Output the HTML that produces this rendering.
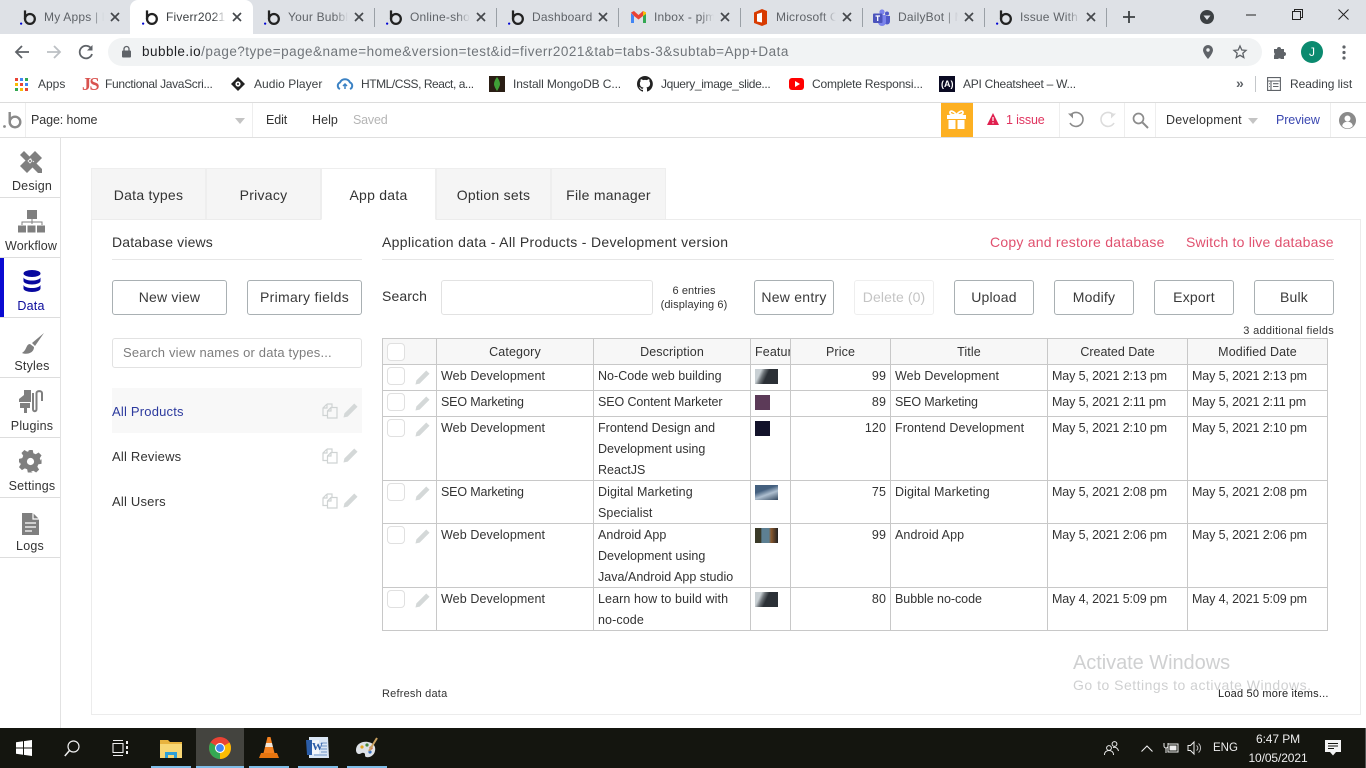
<!DOCTYPE html>
<html lang="en"><head><meta charset="utf-8"><title>Bubble editor</title>
<style>
*{box-sizing:border-box}
html,body{margin:0;padding:0;width:1366px;height:768px;overflow:hidden;background:#fff}
body{font-family:"Liberation Sans",sans-serif;color:#333;position:relative}
.t{position:absolute;white-space:nowrap;line-height:20px;font-size:12.5px;letter-spacing:.05px;color:#333}
.b{position:absolute;background:#ddd}
.tab{color:#5f6368;font-size:12px;letter-spacing:.2px;overflow:hidden;-webkit-mask-image:linear-gradient(90deg,#000 78%,transparent);mask-image:linear-gradient(90deg,#000 78%,transparent)}
.x{position:absolute;top:11px;width:12px;height:12px}
.sep{position:absolute;top:8px;width:1px;height:19px;background:#9aa0a6}
.bk{color:#3c4043;font-size:12px;letter-spacing:.1px}
svg{position:absolute;overflow:visible}
.btn{position:absolute;height:35px;border:1px solid #a9b0b3;border-radius:3px;background:#fff;text-align:center;line-height:33px;font-size:14px;letter-spacing:.2px;color:#3a3a3a;white-space:nowrap}
.ptab{position:absolute;top:168px;height:51px;width:115px;background:#f5f5f5;border:1px solid #eeeeee;border-bottom:0;text-align:center;line-height:53px;font-size:14px;letter-spacing:.25px;color:#333}
.side{position:absolute;left:0;width:60px;text-align:center;font-size:12.5px;letter-spacing:.2px;line-height:16px;color:#333}
.g{background:#c8c8c8}
.hd{position:absolute;top:339px;height:25px;line-height:26px;text-align:center;font-size:12.5px;letter-spacing:.12px;color:#333}
.cb{position:absolute;left:387px;width:18px;height:18px;border:1px solid #e0e0e0;border-radius:4px;background:#fff}
.th{position:absolute;left:755px;height:15px}
.v{font-size:12.5px;letter-spacing:.1px;color:#333}
.d{letter-spacing:-.13px}
</style></head><body>
<svg width="0" height="0" style="position:absolute"><defs>
<symbol id="bl" viewBox="0 0 18 18"><circle cx="10.500" cy="10.500" r="5.200" fill="none" stroke="#222" stroke-width="2.400"/><path d="M5.300 1.500L5.300 10.500" stroke="#222" stroke-width="2.400" fill="none"/><circle cx="1.200" cy="15.500" r="1.200" fill="#0205d3"/></symbol>
<symbol id="xx" viewBox="0 0 12 12"><path d="M2 2L10 10M10 2L2 10" stroke="#45484c" stroke-width="1.700" fill="none"/></symbol>
<symbol id="pn" viewBox="0 0 16 16"><path d="M.5 15.500l1-4.500L12 .5 15.500 4 5 14.500z" fill="#d4d8d8"/></symbol>
<symbol id="cp" viewBox="0 0 16 16"><path d="M5 1h5v3.500M5 1L1 5v7.500h4.500M5 1v4H1M9 4.500h6V15H5.500V8zM9 4.500V8H5.500" fill="none" stroke="#cfd3d3" stroke-width="1.200"/></symbol>
</defs></svg>

<!-- chrome tab strip -->
<div class="b" style="left:0;top:0;width:1366px;height:34px;background:#dee1e6"></div>
<div class="b" style="left:130px;top:0;width:123px;height:35px;background:#fff;border-radius:8px 8px 0 0"></div>
<svg style="left:20px;top:9px" width="17" height="17"><use href="#bl"/></svg><div class="t tab" style="left:44px;top:7px;width:60px">My Apps | Bubble</div><svg class="x" style="left:109px"><use href="#xx"/></svg>
<svg style="left:142px;top:9px" width="17" height="17"><use href="#bl"/></svg><div class="t tab" style="left:166px;top:7px;width:60px;color:#3c4043">Fiverr2021 | Bubble</div><svg class="x" style="left:231px"><use href="#xx"/></svg>
<svg style="left:264px;top:9px" width="17" height="17"><use href="#bl"/></svg><div class="t tab" style="left:288px;top:7px;width:60px">Your Bubble apps</div><svg class="x" style="left:353px"><use href="#xx"/></svg><div class="sep" style="left:374px"></div>
<svg style="left:386px;top:9px" width="17" height="17"><use href="#bl"/></svg><div class="t tab" style="left:410px;top:7px;width:60px">Online-shopping</div><svg class="x" style="left:475px"><use href="#xx"/></svg><div class="sep" style="left:496px"></div>
<svg style="left:508px;top:9px" width="17" height="17"><use href="#bl"/></svg><div class="t tab" style="left:532px;top:7px;width:64px;-webkit-mask-image:none;mask-image:none">Dashboard</div><svg class="x" style="left:597px"><use href="#xx"/></svg><div class="sep" style="left:618px"></div>
<svg style="left:631px;top:11px" width="15" height="12" viewBox="0 0 15 12"><path d="M0 2v10h3V5z" fill="#4285f4"/><path d="M15 2v10h-3V5z" fill="#34a853"/><path d="M0 1.500L3 0l4.500 4L12 0l3 1.500L12 5 7.500 8.500 3 5z" fill="#ea4335"/><path d="M12 0l3 1.500V3l-3 2z" fill="#fbbc04"/></svg><div class="t tab" style="left:654px;top:7px;width:60px">Inbox - pjmwangi</div><svg class="x" style="left:719px"><use href="#xx"/></svg><div class="sep" style="left:740px"></div>
<svg style="left:754px;top:9px" width="13" height="17" viewBox="0 0 13 17"><path d="M0 3.500L8 0l5 2v13l-5 2-8-3z" fill="#d83b01"/><path d="M3 5l5-1.500v10L3 12.500z" fill="#fff"/></svg><div class="t tab" style="left:776px;top:7px;width:60px">Microsoft Office</div><svg class="x" style="left:841px"><use href="#xx"/></svg><div class="sep" style="left:862px"></div>
<svg style="left:873px;top:9px" width="17" height="17" viewBox="0 0 17 17"><circle cx="9" cy="3" r="2.600" fill="#7b83eb"/><circle cx="14" cy="4.500" r="2" fill="#5059c9"/><path d="M11 7h6v5.500a3 3 0 0 1-6 0z" fill="#5059c9"/><path d="M5 6h8v7a4 4 0 0 1-8 0z" fill="#7b83eb"/><rect x="0" y="4.500" width="9.500" height="9.500" rx="1" fill="#4b53bc"/><path d="M2.500 7h4.500M4.700 7v5" stroke="#fff" stroke-width="1.300"/></svg><div class="t tab" style="left:898px;top:7px;width:60px">DailyBot | Microsoft</div><svg class="x" style="left:963px"><use href="#xx"/></svg><div class="sep" style="left:984px"></div>
<svg style="left:996px;top:9px" width="17" height="17"><use href="#bl"/></svg><div class="t tab" style="left:1020px;top:7px;width:60px">Issue With Upload</div><svg class="x" style="left:1085px"><use href="#xx"/></svg><div class="sep" style="left:1106px"></div>
<svg style="left:1122px;top:10px" width="14" height="14" viewBox="0 0 14 14"><path d="M7 1v12M1 7h12" stroke="#3c4043" stroke-width="1.800"/></svg>
<svg style="left:1200px;top:10px" width="14" height="14" viewBox="0 0 14 14"><circle cx="7" cy="7" r="7" fill="#3c4043"/><path d="M3.500 5.500h7L7 10z" fill="#dee1e6"/></svg>
<svg style="left:1246px;top:14px" width="10" height="2"><path d="M0 1h10" stroke="#222" stroke-width="1"/></svg>
<svg style="left:1292px;top:9px" width="11" height="11" viewBox="0 0 11 11"><path d="M.5 2.500h8v8h-8zM2.500 2.500v-2h8v8h-2" fill="none" stroke="#222"/></svg>
<svg style="left:1338px;top:9px" width="11" height="11" viewBox="0 0 11 11"><path d="M.5.500l10 10M10.500.500l-10 10" stroke="#222" stroke-width="1"/></svg>

<!-- toolbar -->
<svg style="left:14px;top:44px" width="16" height="16" viewBox="0 0 16 16"><path d="M15 8H2M8 2L2 8l6 6" fill="none" stroke="#5f6368" stroke-width="1.800"/></svg>
<svg style="left:46px;top:44px" width="16" height="16" viewBox="0 0 16 16"><path d="M1 8h13M8 2l6 6-6 6" fill="none" stroke="#bcc0c4" stroke-width="1.800"/></svg>
<svg style="left:78px;top:44px" width="16" height="16" viewBox="0 0 16 16"><path d="M13.500 5A6.300 6.300 0 1 0 14 10" fill="none" stroke="#5f6368" stroke-width="1.800"/><path d="M14.500 1v5.500H9z" fill="#5f6368"/></svg>
<div class="b" style="left:108px;top:38px;width:1154px;height:28px;background:#f1f3f4;border-radius:14px"></div>
<svg style="left:121px;top:46px" width="11" height="12" viewBox="0 0 11 12"><rect x="1" y="4.500" width="9" height="7" rx="1" fill="#5f6368"/><path d="M3 5V3a2.500 2.500 0 0 1 5 0v2" fill="none" stroke="#5f6368" stroke-width="1.300"/></svg>
<div class="t" style="left:142px;top:42px;font-size:13.500px;letter-spacing:.48px;color:#70757a"><span style="color:#202124">bubble.io</span>/page?type=page&amp;name=home&amp;version=test&amp;id=fiverr2021&amp;tab=tabs-3&amp;subtab=App+Data</div>
<svg style="left:1203px;top:45px" width="10" height="14" viewBox="0 0 10 14"><path d="M5 0a5 5 0 0 1 5 5c0 3.500-5 9-5 9S0 8.500 0 5a5 5 0 0 1 5-5z" fill="#5f6368"/><circle cx="5" cy="5" r="1.700" fill="#f1f3f4"/></svg>
<svg style="left:1233px;top:45px" width="14" height="14" viewBox="0 0 14 14"><path d="M7 1l1.800 4 4.200.4-3.200 2.800 1 4.300L7 10.300 3.200 12.500l1-4.300L1 5.400 5.200 5z" fill="none" stroke="#5f6368" stroke-width="1.300"/></svg>
<svg style="left:1273px;top:45px" width="14" height="14" viewBox="0 0 14 14"><path d="M1 4h3a2 2 0 0 1 4 0h3v3a2 2 0 0 1 0 4v3H8a2 2 0 0 0-3 0H1v-3.500a2 2 0 0 0 0-3z" fill="#5f6368"/></svg>
<div class="b" style="left:1301px;top:41px;width:22px;height:22px;border-radius:50%;background:#0b8a6f;color:#fff;font-size:12px;line-height:22px;text-align:center">J</div>
<svg style="left:1342px;top:45px" width="4" height="15" viewBox="0 0 4 15"><circle cx="2" cy="2" r="1.600" fill="#5f6368"/><circle cx="2" cy="7.500" r="1.600" fill="#5f6368"/><circle cx="2" cy="13" r="1.600" fill="#5f6368"/></svg>

<!-- bookmarks -->
<svg style="left:15px;top:78px" width="13" height="13" viewBox="0 0 13 13"><rect width="3" height="3" fill="#ea4335"/><rect x="5" width="3" height="3" fill="#4285f4"/><rect x="10" width="3" height="3" fill="#34a853"/><rect y="5" width="3" height="3" fill="#fbbc04"/><rect x="5" y="5" width="3" height="3" fill="#ea4335"/><rect x="10" y="5" width="3" height="3" fill="#4285f4"/><rect y="10" width="3" height="3" fill="#34a853"/><rect x="5" y="10" width="3" height="3" fill="#fbbc04"/><rect x="10" y="10" width="3" height="3" fill="#ea4335"/></svg>
<div class="t bk" style="left:38px;top:74px;letter-spacing:0">Apps</div>
<div class="t" style="left:82px;top:74px;font-family:'Liberation Serif',serif;font-weight:700;font-size:18px;letter-spacing:-1.500px;color:#d9534f">JS</div>
<div class="t bk" style="left:105px;top:74px;letter-spacing:-.33px">Functional JavaScri...</div>
<svg style="left:231px;top:77px" width="14" height="14" viewBox="0 0 14 14"><path d="M7 0l7 7-7 7-7-7z" fill="#222"/><circle cx="7" cy="7" r="2.600" fill="#fff"/><circle cx="7" cy="7" r="1" fill="#222"/></svg>
<div class="t bk" style="left:254px;top:74px;letter-spacing:.03px">Audio Player</div>
<svg style="left:337px;top:78px" width="16" height="12" viewBox="0 0 16 12"><path d="M3 11a3.500 3.500 0 0 1 0-6.500 5.500 5.500 0 0 1 10 0A3.500 3.500 0 0 1 13 11" fill="none" stroke="#3b82c4" stroke-width="2"/><path d="M8 11V6M6 8l2-2 2 2" fill="none" stroke="#3b82c4" stroke-width="1.500"/></svg>
<div class="t bk" style="left:361px;top:74px;letter-spacing:-.45px">HTML/CSS, React, a...</div>
<div class="b" style="left:489px;top:76px;width:16px;height:16px;background:#2a1e14"></div>
<svg style="left:494px;top:77px" width="6" height="14" viewBox="0 0 6 14"><path d="M3 0c2 2.500 3 5 3 7s-1.500 4.500-3 7c-1.500-2.500-3-5-3-7s1-4.500 3-7z" fill="#3fa037"/></svg>
<div class="t bk" style="left:513px;top:74px;letter-spacing:-.1px">Install MongoDB C...</div>
<svg style="left:637px;top:76px" width="16" height="16" viewBox="0 0 16 16"><path d="M8 0a8 8 0 0 0-2.500 15.600c.4 0 .5-.2.500-.4v-1.400c-2.200.5-2.700-1-2.700-1-.4-.9-.9-1.200-.9-1.200-.7-.5.100-.5.100-.5.800.1 1.200.8 1.200.8.700 1.200 1.900.9 2.300.7.100-.5.300-.9.500-1.100-1.800-.2-3.600-.9-3.600-4 0-.9.300-1.600.8-2.100-.1-.2-.4-1 .1-2.100 0 0 .7-.2 2.200.8a7.500 7.500 0 0 1 4 0c1.500-1 2.200-.8 2.200-.8.400 1.100.2 1.900.1 2.100.5.600.8 1.300.8 2.100 0 3.100-1.900 3.700-3.700 3.900.3.300.6.800.6 1.500v2.200c0 .2.100.5.600.4A8 8 0 0 0 8 0z" fill="#222"/></svg>
<div class="t bk" style="left:661px;top:74px;letter-spacing:-.35px">Jquery_image_slide...</div>
<div class="b" style="left:789px;top:78px;width:15px;height:12px;background:#f00;border-radius:3px"></div>
<svg style="left:795px;top:81px" width="5" height="6"><path d="M0 0l5 3-5 3z" fill="#fff"/></svg>
<div class="t bk" style="left:812px;top:74px;letter-spacing:-.2px">Complete Responsi...</div>
<div class="b" style="left:939px;top:76px;width:16px;height:16px;background:#0a0a23"></div>
<div class="t" style="left:941px;top:74px;font-size:9px;font-weight:700;color:#fff;letter-spacing:0">(A)</div>
<div class="t bk" style="left:963px;top:74px;letter-spacing:-.25px">API Cheatsheet – W...</div>
<div class="t" style="left:1236px;top:73px;font-size:14px;font-weight:700;color:#5f6368">»</div>
<div class="b" style="left:1255px;top:76px;width:1px;height:16px;background:#c4c7ca"></div>
<svg style="left:1267px;top:77px" width="14" height="14" viewBox="0 0 14 14"><path d="M.6.600h12.800v12.800H.6zM.6 4h12.800M4 4v9.400M6 6.700h5.500M6 9.500h5.500M2 6.700h.8M2 9.500h.8" fill="none" stroke="#5f6368" stroke-width="1.100"/></svg>
<div class="t bk" style="left:1290px;top:74px;letter-spacing:-.05px">Reading list</div>
<div class="b" style="left:0;top:102px;width:1366px;height:1px;background:#dcdcdc"></div>

<!-- bubble header -->
<div class="b" style="left:0;top:137px;width:1366px;height:1px;background:#dfdfdf"></div>
<div class="b" style="left:25px;top:103px;width:1px;height:34px;background:#eee"></div>
<svg style="left:3px;top:110px" width="18" height="19" viewBox="0 0 18 19"><circle cx="12" cy="12" r="5.300" fill="none" stroke="#8a8a8a" stroke-width="2.400"/><path d="M6.700 2v10" stroke="#8a8a8a" stroke-width="2.400"/><circle cx="1.500" cy="16.500" r="1.400" fill="#8a8a8a"/></svg>
<div class="t" style="left:31px;top:110px;letter-spacing:-.1px">Page: home</div>
<svg style="left:235px;top:118px" width="10" height="6"><path d="M0 0h10L5 6z" fill="#c4c4c4"/></svg>
<div class="b" style="left:252px;top:103px;width:1px;height:34px;background:#eee"></div>
<div class="t" style="left:266px;top:110px;letter-spacing:-.1px">Edit</div>
<div class="t" style="left:312px;top:110px;letter-spacing:.05px">Help</div>
<div class="t" style="left:353px;top:110px;color:#b5b5b5;letter-spacing:-.2px">Saved</div>
<div class="b" style="left:941px;top:103px;width:32px;height:34px;background:#fdb022"></div>
<svg style="left:946px;top:110px" width="21" height="20" viewBox="0 0 21 20"><path d="M1 5h19v4H1zM2.500 10h7v9h-7zM11.500 10h7v9h-7z" fill="#fff"/><path d="M10.500 5C8 1 4 0 4 2.500S8 5 10.500 5zM10.500 5C13 1 17 0 17 2.500S13 5 10.500 5z" fill="none" stroke="#fff" stroke-width="1.800"/></svg>
<svg style="left:987px;top:113px" width="12" height="12" viewBox="0 0 12 12"><path d="M6 0l6 12H0z" fill="#e0204f"/><path d="M6 4v4M6 9.200v1.300" stroke="#fff" stroke-width="1.200"/></svg>
<div class="t" style="left:1006px;top:110px;color:#e0345f;letter-spacing:-.15px">1 issue</div>
<div class="b" style="left:1059px;top:103px;width:1px;height:34px;background:#eee"></div>
<svg style="left:1068px;top:112px" width="16" height="16" viewBox="0 0 16 16"><path d="M3 2.500A7 7 0 1 1 2 11" fill="none" stroke="#8b8b8b" stroke-width="1.600"/><path d="M0 1.500h5v5z" fill="#8b8b8b"/></svg>
<svg style="left:1100px;top:112px" width="16" height="16" viewBox="0 0 16 16"><path d="M13 2.500A7 7 0 1 0 14 11" fill="none" stroke="#dcdcdc" stroke-width="1.600"/><path d="M16 1.500h-5v5z" fill="#dcdcdc"/></svg>
<div class="b" style="left:1124px;top:103px;width:1px;height:34px;background:#eee"></div>
<svg style="left:1132px;top:112px" width="17" height="17" viewBox="0 0 17 17"><circle cx="6.500" cy="6.500" r="5" fill="none" stroke="#8b8b8b" stroke-width="1.700"/><path d="M10.500 10.500L16 16" stroke="#8b8b8b" stroke-width="2"/></svg>
<div class="b" style="left:1155px;top:103px;width:1px;height:34px;background:#eee"></div>
<div class="t" style="left:1166px;top:110px;letter-spacing:.2px">Development</div>
<svg style="left:1248px;top:118px" width="10" height="6"><path d="M0 0h10L5 6z" fill="#c4c4c4"/></svg>
<div class="t" style="left:1276px;top:110px;color:#3a47b0;letter-spacing:-.1px">Preview</div>
<div class="b" style="left:1330px;top:103px;width:1px;height:34px;background:#eee"></div>
<svg style="left:1339px;top:112px" width="17" height="17" viewBox="0 0 17 17"><circle cx="8.500" cy="8.500" r="8.500" fill="#8b8b8b"/><circle cx="8.500" cy="6.500" r="3" fill="#fff"/><path d="M3.200 14c.5-3 2.700-4.200 5.300-4.200s4.800 1.200 5.300 4.200a7 7 0 0 1-10.600 0z" fill="#fff"/></svg>

<!-- sidebar -->
<div class="b" style="left:60px;top:138px;width:1px;height:590px;background:#e2e2e2"></div>
<div class="b" style="left:0;top:197px;width:60px;height:1px"></div>
<div class="b" style="left:0;top:257px;width:60px;height:1px"></div>
<div class="b" style="left:0;top:317px;width:60px;height:1px"></div>
<div class="b" style="left:0;top:377px;width:60px;height:1px"></div>
<div class="b" style="left:0;top:437px;width:60px;height:1px"></div>
<div class="b" style="left:0;top:497px;width:60px;height:1px"></div>
<div class="b" style="left:0;top:557px;width:60px;height:1px"></div>
<div class="b" style="left:0;top:258px;width:4px;height:59px;background:#0a0ad2"></div>
<svg style="left:19px;top:150px" width="24" height="24" viewBox="0 0 24 24"><path d="M1 5l4-4 18 18v4h-4z" fill="#7f7f7f"/><path d="M16 1l7 7-15 15-7-7z" fill="#7f7f7f"/><path d="M9 11l2 2 2-2-2-2zM11.500 8.500l1 1M14 11l1 1" stroke="#fff" stroke-width=".8" fill="none"/></svg>
<div class="side" style="top:178px;left:2px">Design</div>
<svg style="left:18px;top:210px" width="27" height="23" viewBox="0 0 27 23"><rect x="9" y="0" width="10" height="9" fill="#7f7f7f"/><path d="M14 9v5M4 15v-3h20v3" stroke="#7f7f7f" fill="none"/><rect x="0" y="15.500" width="8" height="7" fill="#7f7f7f"/><rect x="9.500" y="15.500" width="8" height="7" fill="#7f7f7f"/><rect x="19" y="15.500" width="8" height="7" fill="#7f7f7f"/></svg>
<div class="side" style="top:238px;left:1px;letter-spacing:.1px">Workflow</div>
<svg style="left:23px;top:270px" width="18" height="22" viewBox="0 0 18 22"><ellipse cx="9" cy="3.500" rx="8.500" ry="3.500" fill="#08089f"/><path d="M.5 7.500c1 2 4.500 3 8.500 3s7.500-1 8.500-3V11c0 2-4 3.500-8.500 3.500S.5 13 .5 11z" fill="#08089f"/><path d="M.5 15c1 2 4.500 3 8.500 3s7.500-1 8.500-3v3.500c0 2-4 3.500-8.500 3.500S.5 20.500.5 18.500z" fill="#08089f"/></svg>
<div class="side" style="top:298px;left:1px;color:#0b0b9c">Data</div>
<svg style="left:21px;top:333px" width="24" height="22" viewBox="0 0 24 22"><path d="M23 0L11 10l3 3zM9 11c-4 0-3 6-8 9 5 2 12 0 12-6z" fill="#7f7f7f"/></svg>
<div class="side" style="top:358px;left:2px">Styles</div>
<svg style="left:19px;top:390px" width="25" height="24" viewBox="0 0 25 24"><path d="M0 9l5-4v-5h7v12H0zM1 13h10v5H8v5H5v-5H1z" fill="#7f7f7f" fill-rule="evenodd"/><path d="M14 3v16c0 3 3.500 3 3.500 0V3c0-2.500 5.500-2.500 5.500 0v8" fill="none" stroke="#7f7f7f" stroke-width="2"/></svg>
<div class="side" style="top:418px;left:2px">Plugins</div>
<svg style="left:19px;top:450px" width="23" height="23" viewBox="0 0 23 23"><path d="M9 0h5l.7 3.300 2.400 1 2.900-1.800 3 3-1.800 2.900 1 2.400L23 9v5l-3.300.7-1 2.400 1.800 2.900-3 3-2.900-1.800-2.400 1L14 23H9l-.7-3.300-2.400-1L3 20.500l-3-3 1.800-2.900-1-2.400L0 14V9l3.300-.7 1-2.400L2.500 3l3-3 2.900 1.800 2.400-1z" fill="#7f7f7f" transform="scale(.98)"/><circle cx="11.500" cy="11.500" r="3.600" fill="#fff"/></svg>
<div class="side" style="top:478px;left:2px">Settings</div>
<svg style="left:22px;top:513px" width="17" height="22" viewBox="0 0 17 22"><path d="M0 0h11l6 6v16H0z" fill="#7f7f7f"/><path d="M11 0v6h6M3 10h11M3 14h11M3 18h7" fill="none" stroke="#fff" stroke-width="1.200"/></svg>
<div class="side" style="top:538px;left:0">Logs</div>

<!-- panel -->
<div class="b" style="left:91px;top:219px;width:1270px;height:496px;background:#fff;border:1px solid #ececec"></div>
<div class="ptab" style="left:91px">Data types</div>
<div class="ptab" style="left:206px">Privacy</div>
<div class="ptab" style="left:321px;background:#fff;height:52px;border-bottom:1px solid #fff;">App data</div>
<div class="ptab" style="left:436px">Option sets</div>
<div class="ptab" style="left:551px">File manager</div>

<div class="t" style="left:112px;top:232px;font-size:14px;letter-spacing:.15px">Database views</div>
<div class="b" style="left:112px;top:259px;width:250px;height:1px;background:#e6e6e6"></div>
<div class="t" style="left:382px;top:232px;font-size:14px;letter-spacing:.31px">Application data - All Products - Development version</div>
<div class="b" style="left:382px;top:259px;width:952px;height:1px;background:#e6e6e6"></div>
<div class="t" style="left:990px;top:232px;font-size:14px;letter-spacing:.23px;color:#e0506e">Copy and restore database</div>
<div class="t" style="left:1186px;top:232px;font-size:14px;letter-spacing:.2px;color:#e0506e">Switch to live database</div>

<div class="btn" style="left:112px;top:280px;width:115px">New view</div>
<div class="btn" style="left:247px;top:280px;width:115px;letter-spacing:.3px">Primary fields</div>
<div class="b" style="left:112px;top:338px;width:250px;height:30px;background:#fff;border:1px solid #e2e2e2;border-radius:3px"></div>
<div class="t" style="left:123px;top:343px;font-size:13px;color:#7d7d7d;letter-spacing:.17px">Search view names or data types...</div>
<div class="b" style="left:112px;top:388px;width:250px;height:45px;background:#f8f8f8"></div>
<div class="t" style="left:112px;top:402px;font-size:13px;color:#2c3a9e;letter-spacing:.2px">All Products</div>
<div class="t" style="left:112px;top:447px;font-size:13px;letter-spacing:.2px">All Reviews</div>
<div class="t" style="left:112px;top:492px;font-size:13px;letter-spacing:.2px">All Users</div>
<svg style="left:322px;top:403px" width="16" height="16"><use href="#cp"/></svg><svg style="left:343px;top:403px" width="15" height="15"><use href="#pn"/></svg>
<svg style="left:322px;top:448px" width="16" height="16"><use href="#cp"/></svg><svg style="left:343px;top:448px" width="15" height="15"><use href="#pn"/></svg>
<svg style="left:322px;top:493px" width="16" height="16"><use href="#cp"/></svg><svg style="left:343px;top:493px" width="15" height="15"><use href="#pn"/></svg>

<div class="t" style="left:382px;top:286px;font-size:14px;letter-spacing:.1px">Search</div>
<div class="b" style="left:441px;top:280px;width:212px;height:35px;background:#fff;border:1px solid #e2e2e2;border-radius:3px"></div>
<div class="t" style="left:659px;top:284px;width:70px;text-align:center;font-size:11px;line-height:14px;letter-spacing:.1px">6 entries<br>(displaying 6)</div>
<div class="btn" style="left:754px;top:280px;width:80px;letter-spacing:.25px">New entry</div>
<div class="btn" style="left:854px;top:280px;width:80px;border-color:#eee;color:#c4c4c4;letter-spacing:.1px">Delete (0)</div>
<div class="btn" style="left:954px;top:280px;width:80px">Upload</div>
<div class="btn" style="left:1054px;top:280px;width:80px">Modify</div>
<div class="btn" style="left:1154px;top:280px;width:80px">Export</div>
<div class="btn" style="left:1254px;top:280px;width:80px">Bulk</div>
<div class="t" style="right:32px;top:321px;font-size:11px;letter-spacing:.3px">3 additional fields</div>

<!-- table -->
<div class="b" style="left:382px;top:338px;width:946px;height:26px;background:#f7f7f7"></div>
<div class="b g" style="left:382px;top:338px;width:946px;height:1px"></div>
<div class="b g" style="left:382px;top:364px;width:946px;height:1px"></div>
<div class="b g" style="left:382px;top:390px;width:946px;height:1px"></div>
<div class="b g" style="left:382px;top:416px;width:946px;height:1px"></div>
<div class="b g" style="left:382px;top:480px;width:946px;height:1px"></div>
<div class="b g" style="left:382px;top:523px;width:946px;height:1px"></div>
<div class="b g" style="left:382px;top:587px;width:946px;height:1px"></div>
<div class="b g" style="left:382px;top:630px;width:946px;height:1px"></div>
<div class="b g" style="left:382px;top:338px;width:1px;height:293px"></div>
<div class="b g" style="left:436px;top:338px;width:1px;height:293px"></div>
<div class="b g" style="left:593px;top:338px;width:1px;height:293px"></div>
<div class="b g" style="left:750px;top:338px;width:1px;height:293px"></div>
<div class="b g" style="left:790px;top:338px;width:1px;height:293px"></div>
<div class="b g" style="left:890px;top:338px;width:1px;height:293px"></div>
<div class="b g" style="left:1047px;top:338px;width:1px;height:293px"></div>
<div class="b g" style="left:1187px;top:338px;width:1px;height:293px"></div>
<div class="b g" style="left:1327px;top:338px;width:1px;height:293px"></div>

<div class="cb" style="top:343px"></div>
<div class="hd" style="left:437px;width:156px">Category</div>
<div class="hd" style="left:594px;width:156px">Description</div>
<div class="hd" style="left:755px;width:35px;overflow:hidden;text-align:left">Featured</div>
<div class="hd" style="left:791px;width:99px">Price</div>
<div class="hd" style="left:891px;width:156px">Title</div>
<div class="hd" style="left:1048px;width:139px;letter-spacing:0">Created Date</div>
<div class="hd" style="left:1188px;width:139px">Modified Date</div>

<div class="cb" style="top:367px"></div><svg style="left:415px;top:370px" width="15" height="15"><use href="#pn"/></svg>
<div class="cb" style="top:393px"></div><svg style="left:415px;top:396px" width="15" height="15"><use href="#pn"/></svg>
<div class="cb" style="top:419px"></div><svg style="left:415px;top:422px" width="15" height="15"><use href="#pn"/></svg>
<div class="cb" style="top:483px"></div><svg style="left:415px;top:486px" width="15" height="15"><use href="#pn"/></svg>
<div class="cb" style="top:526px"></div><svg style="left:415px;top:529px" width="15" height="15"><use href="#pn"/></svg>
<div class="cb" style="top:590px"></div><svg style="left:415px;top:593px" width="15" height="15"><use href="#pn"/></svg>

<div class="t v" style="left:441px;top:366px">Web Development</div><div class="t v" style="left:598px;top:366px;letter-spacing:.03px">No-Code web building</div>
<div class="th" style="top:369px;width:23px;background:linear-gradient(115deg,#c9d0d4 0 22%,#6d7378 35%,#2b3036 50% 100%)"></div>
<div class="t v" style="left:791px;top:366px;width:95px;text-align:right">99</div><div class="t v" style="left:895px;top:366px">Web Development</div><div class="t v d" style="left:1052px;top:366px">May 5, 2021 2:13 pm</div><div class="t v d" style="left:1192px;top:366px">May 5, 2021 2:13 pm</div>

<div class="t v" style="left:441px;top:392px;letter-spacing:-.15px">SEO Marketing</div><div class="t v" style="left:598px;top:392px;letter-spacing:-.1px">SEO Content Marketer</div>
<div class="th" style="top:395px;width:15px;background:#5c3a58"></div>
<div class="t v" style="left:791px;top:392px;width:95px;text-align:right">89</div><div class="t v" style="left:895px;top:392px;letter-spacing:-.15px">SEO Marketing</div><div class="t v d" style="left:1052px;top:392px">May 5, 2021 2:11 pm</div><div class="t v d" style="left:1192px;top:392px">May 5, 2021 2:11 pm</div>

<div class="t v" style="left:441px;top:418px">Web Development</div><div class="t v" style="left:598px;top:418px;line-height:21px;letter-spacing:.02px">Frontend Design and<br>Development using<br>ReactJS</div>
<div class="th" style="top:421px;width:15px;background:#12122a"></div>
<div class="t v" style="left:791px;top:418px;width:95px;text-align:right">120</div><div class="t v" style="left:895px;top:418px">Frontend Development</div><div class="t v d" style="left:1052px;top:418px">May 5, 2021 2:10 pm</div><div class="t v d" style="left:1192px;top:418px">May 5, 2021 2:10 pm</div>

<div class="t v" style="left:441px;top:482px;letter-spacing:-.15px">SEO Marketing</div><div class="t v" style="left:598px;top:482px;line-height:21px">Digital Marketing<br>Specialist</div>
<div class="th" style="top:485px;width:23px;background:linear-gradient(160deg,#44607f 0 35%,#aebfd0 60%,#33485f)"></div>
<div class="t v" style="left:791px;top:482px;width:95px;text-align:right">75</div><div class="t v" style="left:895px;top:482px">Digital Marketing</div><div class="t v d" style="left:1052px;top:482px">May 5, 2021 2:08 pm</div><div class="t v d" style="left:1192px;top:482px">May 5, 2021 2:08 pm</div>

<div class="t v" style="left:441px;top:525px">Web Development</div><div class="t v" style="left:598px;top:525px;line-height:21px;letter-spacing:.02px">Android App<br>Development using<br>Java/Android App studio</div>
<div class="th" style="top:528px;width:23px;background:linear-gradient(90deg,#3a3a28 0 25%,#5d7f92 30% 60%,#8a5a30 70%,#222)"></div>
<div class="t v" style="left:791px;top:525px;width:95px;text-align:right">99</div><div class="t v" style="left:895px;top:525px">Android App</div><div class="t v d" style="left:1052px;top:525px">May 5, 2021 2:06 pm</div><div class="t v d" style="left:1192px;top:525px">May 5, 2021 2:06 pm</div>

<div class="t v" style="left:441px;top:589px">Web Development</div><div class="t v" style="left:598px;top:589px;line-height:21px">Learn how to build with<br>no-code</div>
<div class="th" style="top:592px;width:23px;background:linear-gradient(115deg,#c9d0d4 0 22%,#6d7378 35%,#2b3036 50% 100%)"></div>
<div class="t v" style="left:791px;top:589px;width:95px;text-align:right">80</div><div class="t v" style="left:895px;top:589px;letter-spacing:-.05px">Bubble no-code</div><div class="t v d" style="left:1052px;top:589px">May 4, 2021 5:09 pm</div><div class="t v d" style="left:1192px;top:589px">May 4, 2021 5:09 pm</div>

<div class="t" style="left:382px;top:684px;font-size:11px;letter-spacing:.2px">Refresh data</div>
<div class="t" style="left:1073px;top:653px;font-size:20px;letter-spacing:-.05px;color:#cfd0d1">Activate Windows</div>
<div class="t" style="left:1073px;top:675px;font-size:14px;letter-spacing:.5px;color:#cfd0d1">Go to Settings to activate Windows.</div>
<div class="t" style="left:1218px;top:684px;font-size:11px;letter-spacing:.2px;color:#222">Load 50 more items...</div>

<!-- taskbar -->
<div class="b" style="left:0;top:728px;width:1366px;height:40px;background:#14150f"></div>
<div class="b" style="left:196px;top:728px;width:48px;height:40px;background:#44443f"></div>
<div class="b" style="left:151px;top:766px;width:40px;height:2px;background:#7fbde8"></div>
<div class="b" style="left:196px;top:766px;width:48px;height:2px;background:#7fbde8"></div>
<div class="b" style="left:249px;top:766px;width:40px;height:2px;background:#7fbde8"></div>
<div class="b" style="left:298px;top:766px;width:40px;height:2px;background:#7fbde8"></div>
<div class="b" style="left:347px;top:766px;width:40px;height:2px;background:#7fbde8"></div>
<svg style="left:16px;top:740px" width="16" height="16" viewBox="0 0 16 16"><path d="M0 2.300l7-1v6.200H0zM8 1.100L16 0v7.500H8zM0 8.500h7v6.200l-7-1zM8 8.500h8V16l-8-1.100z" fill="#fff"/></svg>
<svg style="left:64px;top:740px" width="16" height="17" viewBox="0 0 16 17"><circle cx="9.500" cy="6.500" r="5.500" fill="none" stroke="#eee" stroke-width="1.200"/><path d="M5.500 10.500L.8 16" stroke="#eee" stroke-width="1.500"/></svg>
<svg style="left:112px;top:740px" width="17" height="16" viewBox="0 0 17 16"><path d="M1 3.500h10v9H1zM1 .5h10M1 15.500h10" fill="none" stroke="#eee" stroke-width="1.100"/><path d="M14 1h2v3h-2zM14 6h2v3h-2zM14 11h2v3h-2z" fill="#eee"/></svg>
<svg style="left:160px;top:739px" width="22" height="19" viewBox="0 0 22 19"><path d="M0 1h8l2 2h12v3H0z" fill="#e8b33f"/><path d="M0 5h22v14H0z" fill="#f8d775"/><path d="M5 19v-6h12v6h-3v-3H8v3z" fill="#2ea0d8"/></svg>
<svg style="left:209px;top:737px" width="22" height="22" viewBox="0 0 22 22"><circle cx="11" cy="11" r="11" fill="#ea4335"/><path d="M11 11L1.500 5.500A11 11 0 0 0 11 22z" fill="#34a853"/><path d="M11 11l9.500-5.500A11 11 0 0 1 11 22z" fill="#fbbc04"/><circle cx="11" cy="11" r="5" fill="#fff"/><circle cx="11" cy="11" r="3.900" fill="#4285f4"/></svg>
<svg style="left:259px;top:737px" width="20" height="21" viewBox="0 0 20 21"><path d="M8.500 0h3l1.500 6H7z" fill="#f58220"/><path d="M7 6h6l1 4H6z" fill="#f3e6d8"/><path d="M6 10h8l1.500 6h-11z" fill="#f58220"/><path d="M2 16h16l2 5H0z" fill="#e8750f"/></svg>
<svg style="left:306px;top:737px" width="23" height="21" viewBox="0 0 23 21"><path d="M3 0h19l1 21H3z" fill="#dbe7f5"/><path d="M1 4l12-1v14H2z" fill="#f4f7fb"/><path d="M0 3h6v15H1z" fill="#2b5da8"/><path d="M15 6h6M15 9h6M15 12h6M15 15h6M8 18h13" stroke="#6f94c8"/></svg>
<div class="t" style="left:312px;top:737px;font-family:'Liberation Serif',serif;font-size:11px;font-weight:700;color:#2b5da8;letter-spacing:0">W</div>
<svg style="left:355px;top:737px" width="24" height="23" viewBox="0 0 24 23"><path d="M1 13C1 7 7 4 13 5c6 1 8 5 7 9-1 5-6 7-9 6-2-1 0-3-2-4s-3 1-5 1-3-2-3-4z" fill="#dfe3e8"/><circle cx="7" cy="10" r="1.600" fill="#e2a51f"/><circle cx="12" cy="8" r="1.600" fill="#4a8a3f"/><circle cx="16" cy="11" r="1.600" fill="#d2452f"/><circle cx="15" cy="15" r="1.600" fill="#3b73c4"/><path d="M22 1L14 14" stroke="#c8a060" stroke-width="2"/></svg>

<svg style="left:1104px;top:741px" width="15" height="14" viewBox="0 0 15 14"><circle cx="5" cy="7" r="2.400" fill="none" stroke="#eee"/><path d="M.5 14c0-3 2-4.500 4.500-4.500S9.500 11 9.500 14" fill="none" stroke="#eee"/><circle cx="10.500" cy="3" r="2.400" fill="none" stroke="#eee"/><path d="M9 6.500c3-.8 5 1 5.500 3.500" fill="none" stroke="#eee"/></svg>
<svg style="left:1141px;top:745px" width="12" height="7" viewBox="0 0 12 7"><path d="M.5 6.500L6 1l5.500 5.500" fill="none" stroke="#eee" stroke-width="1.100"/></svg>
<svg style="left:1163px;top:742px" width="16" height="12" viewBox="0 0 16 12"><rect x="5" y="2" width="10" height="8" fill="none" stroke="#eee"/><rect x="6.500" y="3.500" width="7" height="5" fill="#eee"/><path d="M1 1v3a2 2 0 0 0 4 0V1M3 6v5" stroke="#eee" fill="none"/></svg>
<svg style="left:1187px;top:741px" width="16" height="14" viewBox="0 0 16 14"><path d="M1 4.500h2.500L7 1v12L3.500 9.500H1z" fill="none" stroke="#eee"/><path d="M9.500 4.500a3 3 0 0 1 0 5M11.500 2.500a6 6 0 0 1 0 9" fill="none" stroke="#bbb"/></svg>
<div class="t" style="left:1213px;top:738px;font-size:11.500px;letter-spacing:0;color:#eee">ENG</div>
<div class="t" style="left:1243px;top:729px;width:70px;text-align:center;font-size:12px;letter-spacing:-.1px;color:#eee;line-height:19px;padding-top:1px">6:47 PM<br>10/05/2021</div>
<svg style="left:1325px;top:740px" width="16" height="16" viewBox="0 0 16 16"><path d="M0 0h16v12h-5l-3 3.500L5 12H0z" fill="#f4f4f4"/><path d="M3 3.500h10M3 6h10M3 8.500h6" stroke="#14150f" stroke-width="1"/></svg>
<div class="b" style="left:1365px;top:728px;width:1px;height:40px;background:#555"></div>
</body></html>
